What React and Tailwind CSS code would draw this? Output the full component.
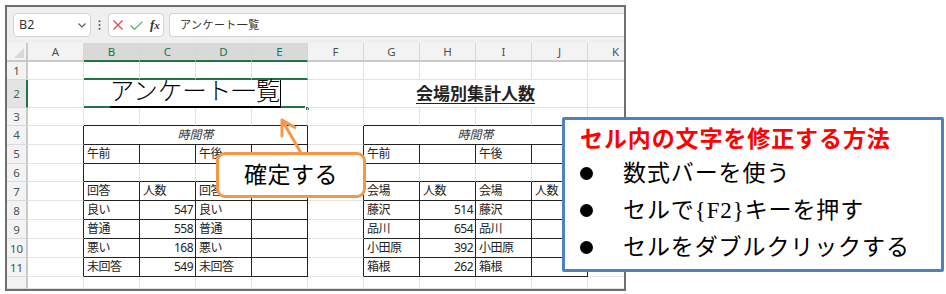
import React from 'react'

const COLS = ['A', 'B', 'C', 'D', 'E', 'F', 'G', 'H', 'I', 'J', 'K']
const SELECTED = ['B', 'C', 'D', 'E']

// table bodies, keyed by row number
const T1 = {
  5: ['午前', '', '午後', ''],
  7: ['回答', '人数', '回答', '人数'],
  8: ['良い', '547', '良い', ''],
  9: ['普通', '558', '普通', ''],
  10: ['悪い', '168', '悪い', ''],
  11: ['未回答', '549', '未回答', ''],
}
const T2 = {
  5: ['午前', '', '午後', ''],
  7: ['会場', '人数', '会場', '人数'],
  8: ['藤沢', '514', '藤沢', ''],
  9: ['品川', '654', '品川', ''],
  10: ['小田原', '392', '小田原', ''],
  11: ['箱根', '262', '箱根', ''],
}

const TIPS = ['数式バーを使う', 'セルで{F2}キーを押す', 'セルをダブルクリックする']

const inTable = c => (c >= 1 && c <= 4) || (c >= 6 && c <= 9)

function lineRight(r, c) {
  if (r < 4 || r > 11) return false
  if (c === 0 || c === 4 || c === 5 || c === 9) return true
  if (r === 4 || r === 6) return false
  return inTable(c)
}
const lineBottom = (r, c) => r >= 3 && r <= 11 && inTable(c)

function cellText(r, c) {
  if (c >= 1 && c <= 4) return T1[r]?.[c - 1] ?? ''
  if (c >= 6 && c <= 9) return T2[r]?.[c - 6] ?? ''
  return ''
}

function Cell({ wide, right, bottom, className = '', children }) {
  return (
    <div
      className={`relative flex h-full shrink-0 items-center overflow-visible border-r ${wide ? 'w-[224px]' : 'w-[56px]'} ${
        right ? 'border-r-[#222]' : 'border-r-[#e2e2e2]'
      } ${bottom} ${className}`}
    >
      {children}
    </div>
  )
}

function RowHead({ n, active }) {
  return (
    <div
      className={`flex h-full w-[21px] shrink-0 items-center justify-center border-r-2 border-b text-[11.5px] ${
        active
          ? 'border-r-[#217346] border-b-[#dadada] bg-[#e4e4e4] text-[#217346]'
          : 'border-r-[#c9c9c9] border-b-[#dadada] bg-[#f3f3f3] text-[#505050]'
      }`}
    >
      {n}
    </div>
  )
}

function GridRow({ r, h }) {
  const cells = []
  for (let c = 0; c < COLS.length; c++) {
    const bottom = lineBottom(r, c)
      ? 'border-b border-b-[#222]'
      : r === 1 && c >= 1 && c <= 4
        ? 'border-b-2 border-b-[#217346]'
        : 'border-b border-b-[#e2e2e2]'

    if (r === 4 && (c === 1 || c === 6)) {
      cells.push(
        <Cell key={c} wide right={lineRight(r, c + 3)} bottom={bottom} className="justify-center">
          <span className="text-[12px] italic text-[#333]">時間帯</span>
        </Cell>
      )
      c += 3
      continue
    }

    const text = cellText(r, c)
    const numeric = /^\d+$/.test(text)
    cells.push(
      <Cell key={c} right={lineRight(r, c)} bottom={bottom} className={numeric ? 'justify-end pr-[2px]' : 'pl-[3px]'}>
        {text && <span className="text-[12px] tracking-[-0.5px] whitespace-nowrap text-[#222]">{text}</span>}
      </Cell>
    )
  }
  return (
    <div className={`flex ${h}`}>
      <RowHead n={r <= 11 ? r : ''} />
      {cells}
    </div>
  )
}

function TitleRow() {
  return (
    <div className="flex h-[30px]">
      <RowHead n={2} active />
      <Cell right={false} bottom="border-b border-b-[#e2e2e2]" />
      <div className="relative flex h-full w-[224px] shrink-0 border-r border-r-[#e2e2e2]">
        <div className="flex-1 border-b-2 border-b-[#217346]" />
        <div className="flex h-full items-end border-r border-b-2 border-r-black border-b-black pb-[1px]">
          <span className="text-[24.5px] leading-none font-light text-black font-['Liberation_Serif','Noto_Sans_CJK_JP',serif]">
            アンケート一覧
          </span>
        </div>
        <div className="flex-1 border-b-2 border-b-[#217346]" />
        <span className="absolute -right-[3px] -bottom-[3px] h-[5px] w-[5px] border border-white bg-[#217346]" />
      </div>
      <Cell right={false} bottom="border-b border-b-[#e2e2e2]" />
      <Cell wide right={false} bottom="border-b border-b-[#e2e2e2]" className="justify-center">
        <span className="text-[17px] font-bold text-[#222] underline decoration-1 underline-offset-[3px]">会場別集計人数</span>
      </Cell>
      <Cell right={false} bottom="border-b border-b-[#e2e2e2]" />
    </div>
  )
}

function FormulaBar() {
  return (
    <div className="flex h-[36px] shrink-0 items-start bg-[#efefef] pt-[6px] pl-[6px]">
      <div className="flex h-[24px] w-[78px] shrink-0 items-center justify-between rounded-[4px] border border-[#d4d4d4] bg-white pr-[4px] pl-[5px]">
        <span className="text-[12.5px] text-[#333]">B2</span>
        <svg width="8" height="5" viewBox="0 0 8 5">
          <polyline points="0.5,0.5 4,4 7.5,0.5" fill="none" stroke="#555" strokeWidth="1.1" />
        </svg>
      </div>
      <div className="flex h-[24px] w-[17px] shrink-0 items-center justify-center">
        <svg width="3" height="10" viewBox="0 0 3 10">
          <circle cx="1.5" cy="1.2" r="1" fill="#555" />
          <circle cx="1.5" cy="5" r="1" fill="#555" />
          <circle cx="1.5" cy="8.8" r="1" fill="#555" />
        </svg>
      </div>
      <div className="flex h-[24px] w-[56px] shrink-0 items-center rounded-[4px] border border-[#d4d4d4] bg-white pl-[4px]">
        <svg width="10" height="10" viewBox="0 0 10 10">
          <path d="M0.5 0.5 L9.5 9.5 M9.5 0.5 L0.5 9.5" stroke="#e04a44" strokeWidth="1.3" />
        </svg>
        <svg className="ml-[7px]" width="13" height="9" viewBox="0 0 13 9">
          <polyline points="0.5,4.5 4.5,8.2 12.5,0.6" fill="none" stroke="#5caf60" strokeWidth="1.3" />
        </svg>
        <span className="ml-[7px] text-[13px] font-bold text-[#333] italic font-['Liberation_Serif',serif]">
          f<span className="text-[11px]">x</span>
        </span>
      </div>
      <div className="ml-[5px] flex h-[24px] flex-1 items-center rounded-l-[4px] border border-r-0 border-[#d4d4d4] bg-white pl-[10px]">
        <span className="text-[11px] tracking-[0.45px] text-[#333]">アンケート一覧</span>
      </div>
    </div>
  )
}

function HeaderRow() {
  return (
    <div className="flex h-[19px] shrink-0">
      <div className="relative h-full w-[21px] shrink-0 border-r-2 border-b-2 border-r-[#c9c9c9] border-b-[#c9c9c9] bg-[#f3f3f3]">
        <svg className="absolute right-[2px] bottom-[2px]" width="10" height="10" viewBox="0 0 10 10">
          <polygon points="10,0 10,10 0,10" fill="#d8d8d8" />
        </svg>
      </div>
      {COLS.map(c => {
        const sel = SELECTED.includes(c)
        return (
          <div
            key={c}
            className={`flex h-full w-[56px] shrink-0 items-center justify-center border-r border-b-2 border-r-[#d6d6d6] text-[11.5px] ${
              sel ? 'border-b-[#217346] bg-[#d9d9d9] text-[#217346]' : 'border-b-[#c9c9c9] bg-[#f3f3f3] text-[#505050]'
            }`}
          >
            {c}
          </div>
        )
      })}
    </div>
  )
}

export default function App() {
  return (
    <div className="relative h-[294px] w-[946px] overflow-hidden bg-white pt-[5px] pl-[5px] font-['Noto_Sans','Noto_Sans_CJK_JP',sans-serif]">
      {/* spreadsheet window */}
      <div className="flex h-[286px] w-[621px] flex-col overflow-hidden border-2 border-[#6e6e6e] bg-white">
        <FormulaBar />
        <HeaderRow />
        <GridRow r={1} h="h-[19px]" />
        <TitleRow />
        {[3, 4, 5, 6, 7, 8, 9, 10, 11].map(r => (
          <GridRow key={r} r={r} h="h-[19.33px]" />
        ))}
        <GridRow r={12} h="h-[19px]" />
      </div>

      {/* arrow */}
      <svg className="absolute top-[108px] left-[270px]" width="40" height="50" viewBox="0 0 40 50">
        <path
          d="M31 45 L12 12 M25 19.5 L12 12 L12 28"
          fill="none"
          stroke="#f79646"
          strokeWidth="3"
          strokeLinecap="round"
          strokeLinejoin="round"
        />
      </svg>

      {/* callout */}
      <div className="absolute top-[152px] left-[216px] flex h-[46px] w-[150px] items-center justify-center rounded-[9px] border-[3px] border-[#f79646] bg-white">
        <span className="text-[23px] leading-none tracking-[0.5px] text-black font-['Liberation_Serif','Noto_Sans_CJK_JP',serif]">確定する</span>
      </div>

      {/* tips box */}
      <div className="absolute top-[117px] left-[562px] h-[155px] w-[382px] rounded-[2px] border-[3px] border-[#4f81bd] bg-white pl-[15px]">
        <div className="flex h-[35px] items-center">
          <span className="text-[23px] leading-none font-bold tracking-[0.9px] text-[#ff0000] font-['Noto_Sans_CJK_JP',sans-serif]">
            セル内の文字を修正する方法
          </span>
        </div>
        {TIPS.map(t => (
          <div key={t} className="flex h-[37px] items-center">
            <span className="h-[13px] w-[13px] shrink-0 rounded-full bg-black" />
            <span className="ml-[30px] text-[23px] leading-none tracking-[0.9px] text-black font-['Liberation_Serif','Noto_Sans_CJK_JP',serif]">
              {t}
            </span>
          </div>
        ))}
      </div>
    </div>
  )
}
